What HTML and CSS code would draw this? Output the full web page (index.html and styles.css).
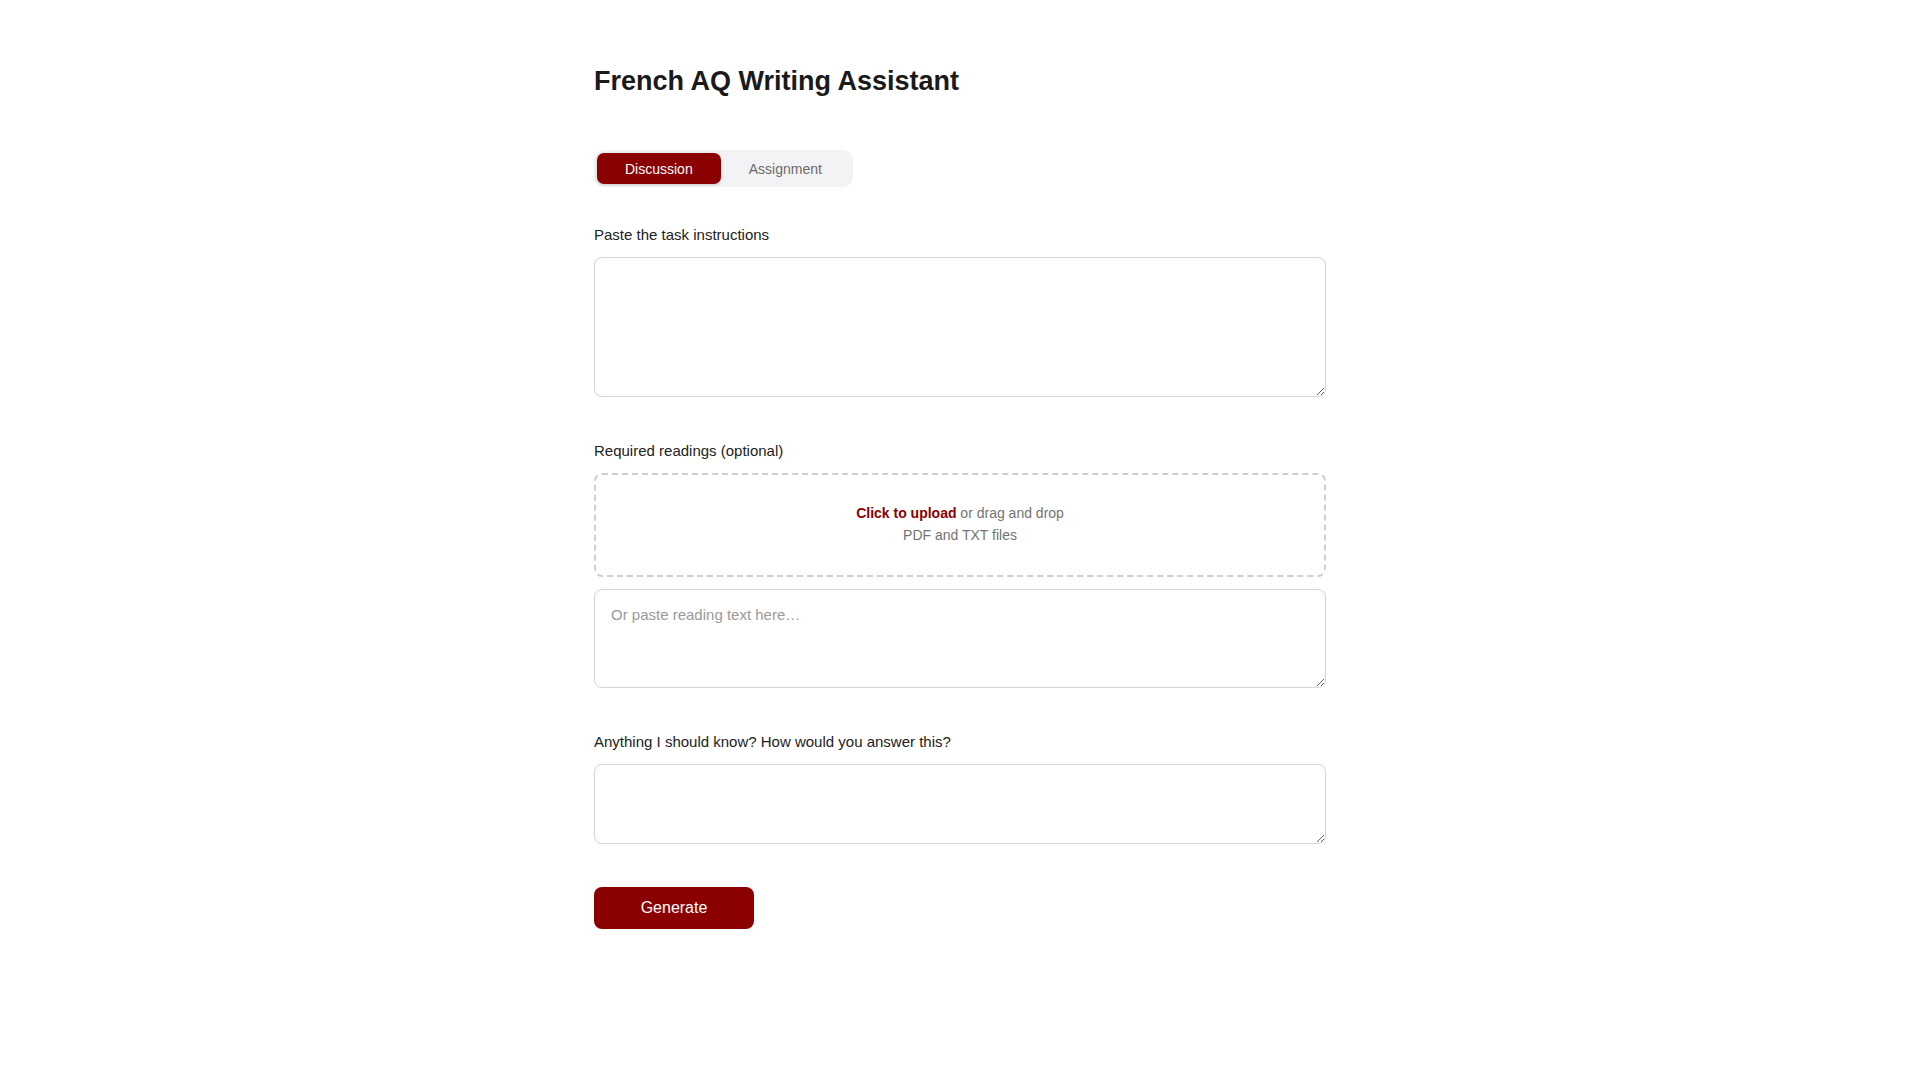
FILE: index.html
```html
<!DOCTYPE html>
<html lang="en">
<head>
<meta charset="utf-8">
<title>French AQ Writing Assistant</title>
<link rel="stylesheet" href="styles.css">
</head>
<body>
<main class="page">
  <h1 class="title">French AQ Writing Assistant</h1>

  <div class="tabs">
    <button class="tab tab-active">Discussion</button>
    <button class="tab">Assignment</button>
  </div>

  <div class="field">
    <label class="label">Paste the task instructions</label>
    <textarea class="input input-lg"></textarea>
  </div>

  <div class="field">
    <label class="label">Required readings (optional)</label>
    <div class="dropzone">
      <div><span class="upload-link">Click to upload</span> or drag and drop</div>
      <div>PDF and TXT files</div>
    </div>
    <textarea class="input input-md" placeholder="Or paste reading text here…"></textarea>
  </div>

  <div class="field field-last">
    <label class="label">Anything I should know? How would you answer this?</label>
    <textarea class="input input-sm"></textarea>
  </div>

  <button class="generate">Generate</button>
</main>
</body>
</html>
```

FILE: styles.css
```css
* { box-sizing: border-box; }

body {
  margin: 0;
  background: #ffffff;
  font-family: "Liberation Sans", Arial, sans-serif;
  color: #222;
}

.page {
  width: 732px;
  margin: 0 auto;
  padding-top: 65px;
}

.title {
  margin: 0 0 53px;
  font-size: 27px;
  font-weight: 700;
  line-height: 32px;
  color: #1a1a1a;
}

.tabs {
  display: inline-flex;
  padding: 3px;
  background: #f3f3f5;
  border-radius: 10px;
  margin-bottom: 39px;
}

.tab {
  height: 31px;
  padding: 0 28px;
  border: none;
  background: transparent;
  border-radius: 7px;
  font-family: inherit;
  font-size: 14px;
  color: #6b6b6b;
  cursor: pointer;
}

.tab-active {
  background: #8b0000;
  color: #ffffff;
  box-shadow: 0 1px 3px rgba(0, 0, 0, 0.18);
}

.field {
  display: flex;
  flex-direction: column;
  margin-bottom: 45px;
}

.field-last {
  margin-bottom: 43px;
}

.label {
  display: block;
  font-size: 15px;
  line-height: 17px;
  color: #222;
  margin-bottom: 14px;
}

.input {
  display: block;
  width: 100%;
  border: 1px solid #d4d4d4;
  border-radius: 8px;
  padding: 16px 16px;
  font-family: inherit;
  font-size: 15px;
  color: #222;
  background: #fff;
  resize: vertical;
  outline: none;
}

.input::placeholder {
  color: #9a9a9a;
}

.input-lg { height: 140px; }
.input-md { height: 99px; }
.input-sm { height: 80px; }

.dropzone {
  border: 2px dashed #cfcfcf;
  border-radius: 8px;
  padding: 27px 16px 29px;
  text-align: center;
  font-size: 14px;
  line-height: 22px;
  color: #737373;
  margin-bottom: 12px;
}

.upload-link {
  color: #8b0000;
  font-weight: 700;
}

.generate {
  display: block;
  width: 160px;
  height: 42px;
  border: none;
  border-radius: 8px;
  background: #8b0000;
  color: #ffffff;
  font-family: inherit;
  font-size: 16px;
  cursor: pointer;
}
```
